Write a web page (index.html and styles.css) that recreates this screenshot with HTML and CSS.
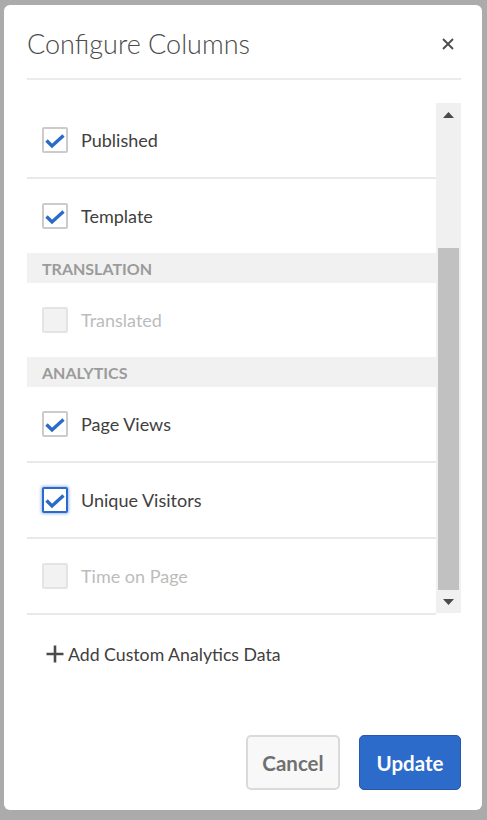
FILE: index.html
```html
<!DOCTYPE html>
<html lang="en">
<head>
<meta charset="utf-8">
<title>Configure Columns</title>
<link rel="stylesheet" href="styles.css">
</head>
<body>
<div class="dialog">
  <div class="dialog-header">
    <h1 class="title">Configure Columns</h1>
    <button class="close" aria-label="Close">
      <svg width="12" height="12" viewBox="0 0 12 12"><path d="M1 1L11 11M11 1L1 11" stroke="#4b4b4b" stroke-width="1.8" fill="none"/></svg>
    </button>
  </div>
  <div class="list">
    <div class="items">
      <div class="row">
        <span class="cb checked"><svg viewBox="0 0 26 26"><path d="M4.5 13.5L10 19L21.5 8.5" stroke="#2b6ac8" stroke-width="3.4" fill="none"/></svg></span>
        <span class="label">Published</span>
      </div>
      <div class="row last">
        <span class="cb checked"><svg viewBox="0 0 26 26"><path d="M4.5 13.5L10 19L21.5 8.5" stroke="#2b6ac8" stroke-width="3.4" fill="none"/></svg></span>
        <span class="label">Template</span>
      </div>
      <div class="group">TRANSLATION</div>
      <div class="row last disabled">
        <span class="cb"></span>
        <span class="label">Translated</span>
      </div>
      <div class="group">ANALYTICS</div>
      <div class="row">
        <span class="cb checked"><svg viewBox="0 0 26 26"><path d="M4.5 13.5L10 19L21.5 8.5" stroke="#2b6ac8" stroke-width="3.4" fill="none"/></svg></span>
        <span class="label">Page Views</span>
      </div>
      <div class="row">
        <span class="cb checked focus"><svg viewBox="0 0 26 26"><path d="M4.5 13.5L10 19L21.5 8.5" stroke="#2b6ac8" stroke-width="3.4" fill="none"/></svg></span>
        <span class="label">Unique Visitors</span>
      </div>
      <div class="row disabled">
        <span class="cb"></span>
        <span class="label">Time on Page</span>
      </div>
    </div>
    <div class="scrollbar">
      <div class="sb-btn up"><svg width="11" height="6" viewBox="0 0 11 6"><path d="M0 6L5.5 0L11 6Z" fill="#4a4a4a"/></svg></div>
      <div class="sb-space"></div>
      <div class="sb-thumb"></div>
      <div class="sb-btn down"><svg width="11" height="6" viewBox="0 0 11 6"><path d="M0 0L5.5 6L11 0Z" fill="#4a4a4a"/></svg></div>
    </div>
  </div>
  <div class="add">
    <svg class="plus" width="18" height="18" viewBox="0 0 18 18"><path d="M9 0.5V17.5M0.5 9H17.5" stroke="#4b4b4b" stroke-width="2.6" fill="none"/></svg>
    <span>Add Custom Analytics Data</span>
  </div>
  <div class="footer">
    <button class="btn cancel">Cancel</button>
    <button class="btn primary">Update</button>
  </div>
</div>
</body>
</html>
```
FILE: styles.css
```css
* { box-sizing: border-box; }
html, body { margin: 0; padding: 0; }
body {
  width: 487px;
  height: 820px;
  overflow: hidden;
  background: #ababab;
  font-family: Lato, "Open Sans", sans-serif;
  color: #4b4b4b;
}
.dialog {
  margin: 5px 0 0 4px;
  width: 478px;
  height: 805px;
  background: #fff;
  border-radius: 6px;
  padding: 0 21px 20px 23px;
  display: flex;
  flex-direction: column;
}
.dialog-header {
  height: 75px;
  padding-top: 4px;
  display: flex;
  align-items: center;
  justify-content: space-between;
  border-bottom: 2px solid #ebebeb;
}
.title {
  margin: 0;
  font-size: 27px;
  font-weight: 300;
  line-height: 1;
  color: #4b4b4b;
}
.close {
  border: 0;
  background: none;
  padding: 0;
  margin-right: 7px;
  width: 12px;
  height: 12px;
  display: flex;
}
.list {
  margin-top: 23px;
  height: 512px;
  display: flex;
}
.items {
  flex: 1;
  display: flex;
  flex-direction: column;
}
.row {
  height: 76px;
  flex: none;
  display: flex;
  align-items: center;
  padding-left: 15px;
  border-bottom: 2px solid #e9e9e9;
}
.row.last {
  height: 74px;
  border-bottom: 0;
}
.cb {
  width: 26px;
  height: 26px;
  border: 2px solid #cbcbcb;
  border-radius: 2px;
  background: #fff;
  display: flex;
  align-items: center;
  justify-content: center;
  flex: none;
}
.cb svg { width: 26px; height: 26px; flex: none; }
.cb.focus {
  border-color: #2b6ac8;
  box-shadow: 0 0 3px 1px rgba(43, 106, 200, 0.45);
}
.disabled .cb {
  background: #f2f2f2;
  border-color: #e4e4e4;
}
.label {
  margin-left: 13px;
  font-size: 18px;
  color: #404040;
}
.disabled .label { color: #bcbcbc; }
.group {
  height: 30px;
  flex: none;
  background: #f1f1f1;
  padding-left: 15px;
  display: flex;
  align-items: center;
  font-size: 16px;
  font-weight: 700;
  color: #9b9b9b;
}
.scrollbar {
  width: 25px;
  height: 510px;
  background: #f0f0f0;
  display: flex;
  flex-direction: column;
}
.sb-btn {
  display: flex;
  justify-content: center;
}
.sb-btn.up { height: 17px; padding-top: 9px; }
.sb-space { height: 128px; }
.sb-thumb {
  height: 342px;
  margin: 0 2px;
  background: #c1c1c1;
}
.sb-btn.down { flex: 1; align-items: center; padding-top: 1px; }
.add {
  margin-top: 24px;
  height: 30px;
  display: flex;
  align-items: center;
  padding-left: 19px;
  font-size: 17.7px;
  color: #404040;
}
.plus { margin-right: 4px; }
.footer {
  margin-top: auto;
  display: flex;
  justify-content: flex-end;
  gap: 19px;
}
.btn {
  height: 55px;
  border-radius: 5px;
  font-family: Lato, "Open Sans", sans-serif;
  font-size: 20.5px;
  font-weight: 700;
  padding: 0;
}
.cancel {
  width: 94px;
  background: #f8f8f8;
  border: 2px solid #dadada;
  color: #707070;
}
.primary {
  width: 102px;
  background: #2c6bc9;
  border: 1px solid #2559ad;
  color: #fff;
}
```
